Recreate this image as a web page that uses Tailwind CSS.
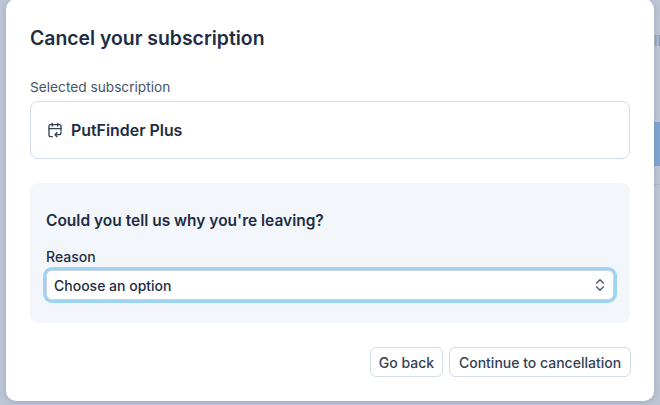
<!DOCTYPE html>
<html lang="en">
<head>
    <meta charset="UTF-8" />
    <title>Cancel your subscription</title>
    <script src="https://cdn.jsdelivr.net/npm/@tailwindcss/browser@4"></script>
</head>

<body class="h-[405px] w-[660px] overflow-hidden bg-[#bcc6d6] font-['Inter',sans-serif] text-[#1e2d45]">
    <div class="relative h-[405px] w-[660px] overflow-hidden">
        <!-- Page behind the modal -->
        <div class="absolute right-0 top-[122px] h-[44px] w-[6px] bg-[#7fa6d2]"></div>
        <div class="absolute right-0 top-[184px] h-px w-[6px] bg-[#aeb9ca]"></div>
        <div class="absolute left-[654px] top-[32px] text-[14px] font-medium leading-[18px] text-[#8f9bad]">ll</div>

        <!-- Modal -->
        <div class="absolute left-[6px] top-[-1px] flex h-[402px] w-[648px] flex-col rounded-[10px] bg-white px-[24px] pt-[1px] shadow-[0_1px_6px_rgba(100,116,139,0.35)]">
            <h1 class="mt-[26px] h-[24px] text-[19.4px] font-semibold leading-[24px] text-[#1e2d45]">Cancel your subscription</h1>

            <p class="mt-[28px] h-[18px] text-[13.7px] leading-[18px] text-[#475569]">Selected subscription</p>
            <div class="mt-[5px] flex h-[58px] items-center gap-[8px] rounded-lg border border-[#d3dde9] pl-[16px]">
                <svg class="h-[16px] w-[16px] text-[#334155]" viewBox="0 0 24 24" fill="none" stroke="currentColor" stroke-width="2" stroke-linecap="round" stroke-linejoin="round">
                    <path d="M8 2v4" />
                    <path d="M16 2v4" />
                    <path d="M21 13V6a2 2 0 0 0-2-2H5a2 2 0 0 0-2 2v14a2 2 0 0 0 2 2h3" />
                    <path d="M3 10h18" />
                    <path d="m15 22-3-3 3-3" />
                    <path d="M21 15v1a3 3 0 0 1-3 3h-5" />
                </svg>
                <span class="mt-[1px] text-[15.9px] font-semibold text-[#1e2d45]">PutFinder Plus</span>
            </div>

            <div class="mt-[24px] h-[140px] rounded-lg bg-[#f3f6fa] px-[16px] pt-[27px]">
                <h2 class="h-[22px] text-[15.5px] font-semibold leading-[22px] text-[#1e2d45]">Could you tell us why you're leaving?</h2>
                <p class="mt-[16px] h-[18px] text-[14px] font-medium leading-[18px] text-[#1e2d45]">Reason</p>
                <div class="mt-[4px] flex h-[30px] items-center justify-between rounded-md border border-[#cbd5e1] bg-white pl-[7px] pr-[5px] text-[14px] font-medium text-[#1e2d45] shadow-[0_0_0_3px_#9dd3f3]">
                    <span>Choose an option</span>
                    <svg class="h-[16px] w-[16px] text-[#475569]" viewBox="0 0 24 24" fill="none" stroke="currentColor" stroke-width="2" stroke-linecap="round" stroke-linejoin="round">
                        <path d="m7 15 5 5 5-5" />
                        <path d="m7 9 5-5 5 5" />
                    </svg>
                </div>
            </div>

            <div class="mr-[-1px] mt-[24px] flex justify-end gap-[6px]">
                <button class="h-[30px] w-[73px] rounded-md border border-[#d3dde9] bg-white text-[14px] font-medium text-[#334155]">Go back</button>
                <button class="h-[30px] w-[182px] rounded-md border border-[#d3dde9] bg-white text-[14px] font-medium text-[#334155]">Continue to cancellation</button>
            </div>
        </div>
    </div>
</body>

</html>
